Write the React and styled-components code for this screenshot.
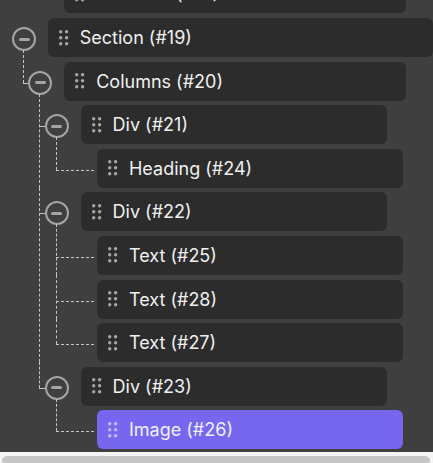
import React from 'react'
import styled, { createGlobalStyle, css } from 'styled-components'

const STEP = 16.4
const ROW_GAP = 4.6
const ROW_H = 39
const LINE_Y = ROW_GAP + ROW_H / 2 + 1.5

const lineX = (depth) => depth * STEP + 23

const GlobalStyle = createGlobalStyle`
  html, body {
    margin: 0;
    padding: 0;
    background: #f4f4f4;
    overflow: hidden;
  }
  body {
    font-family: Inter, "Noto Sans", "Liberation Sans", sans-serif;
  }
`

const Panel = styled.div`
  width: 433px;
  height: 452px;
  background: #3f3f3f;
  overflow: hidden;
`

const Tree = styled.div`
  margin-top: -30.2px;
  display: flex;
  flex-direction: column;
`

const Branch = styled.div`
  position: relative;
  display: flex;
  flex-direction: column;

  ${({ $depth, $first, $last, $leaf, $lines }) => $lines && css`
    &::before {
      content: '';
      position: absolute;
      left: ${lineX($depth - 1)}px;
      top: ${$first ? -7 : 0}px;
      ${$last ? `height: ${($first ? 7 : 0) + LINE_Y}px;` : 'bottom: 0;'}
      border-left: 1px dashed #c4c4c4;
    }
    &::after {
      content: '';
      position: absolute;
      top: ${LINE_Y}px;
      left: ${lineX($depth - 1)}px;
      width: ${($leaf ? $depth * STEP + 45 : $depth * STEP + 12) - lineX($depth - 1)}px;
      border-top: 1px dashed #c4c4c4;
    }
  `}
`

const Row = styled.div`
  display: flex;
  align-items: center;
  margin-top: ${ROW_GAP}px;
  height: ${ROW_H}px;
  padding-left: ${({ $depth }) => $depth * STEP}px;
`

const ToggleSlot = styled.div`
  flex: none;
  width: 48px;
  height: 100%;
  display: flex;
  align-items: center;
  justify-content: center;
  padding-top: 3px;
  box-sizing: border-box;
`

const Toggle = styled.button`
  width: 24px;
  height: 24px;
  padding: 0;
  border-radius: 50%;
  border: 2.5px solid #a5a5a5;
  background: transparent;
  display: flex;
  align-items: center;
  justify-content: center;
  box-sizing: border-box;
  cursor: pointer;
`

const Minus = styled.span`
  width: 11px;
  height: 3px;
  border-radius: 1.5px;
  background: #a5a5a5;
`

const Card = styled.div`
  flex: none;
  box-sizing: border-box;
  width: ${({ $width }) => $width}px;
  height: 100%;
  border-radius: 6px;
  background: ${({ $active }) => ($active ? '#7767ef' : '#2c2c2c')};
  display: flex;
  align-items: center;
  gap: 10.8px;
  padding-left: 11px;
`

const Label = styled.span`
  font-size: 18px;
  color: #f0f0f0;
  white-space: nowrap;
`

const ScrollTrack = styled.div`
  width: 433px;
  height: 11px;
  background: #f4f4f4;
  padding: 4px 3px 0 2px;
  box-sizing: border-box;
`

const Thumb = styled.div`
  height: 10px;
  border-radius: 5px;
  background: #c6c6c6;
`

const Grip = ({ active }) => (
  <svg width="10" height="16" viewBox="0 0 10 16" style={{ flex: 'none' }}>
    {[1.7, 7.7, 13.7].map(cy =>
      [1.7, 7.6].map(cx => (
        <circle key={`${cx}-${cy}`} cx={cx} cy={cy} r="1.7" fill={active ? '#c3bbf8' : '#a6a6a6'} />
      ))
    )}
  </svg>
)

const widths = { section: 385, columns: 342, div: 306, leaf: 306 }

const data = [
  { label: 'Columns (#18)', kind: 'columns', depth: 1, orphan: true },
  {
    label: 'Section (#19)', kind: 'section', depth: 0, children: [
      {
        label: 'Columns (#20)', kind: 'columns', children: [
          { label: 'Div (#21)', kind: 'div', children: [{ label: 'Heading (#24)', kind: 'leaf' }] },
          {
            label: 'Div (#22)', kind: 'div', children: [
              { label: 'Text (#25)', kind: 'leaf' },
              { label: 'Text (#28)', kind: 'leaf' },
              { label: 'Text (#27)', kind: 'leaf' },
            ]
          },
          { label: 'Div (#23)', kind: 'div', children: [{ label: 'Image (#26)', kind: 'leaf', active: true }] },
        ]
      }
    ]
  },
]

const TreeNode = ({ node, depth, first, last, lines }) => {
  const hasChildren = node.children && node.children.length > 0
  return (
    <Branch $depth={depth} $first={first} $last={last} $leaf={!hasChildren} $lines={lines}>
      <Row $depth={depth}>
        <ToggleSlot>
          {hasChildren && (
            <Toggle>
              <Minus />
            </Toggle>
          )}
        </ToggleSlot>
        <Card $width={widths[node.kind]} $active={node.active}>
          <Grip active={node.active} />
          <Label>{node.label}</Label>
        </Card>
      </Row>
      {hasChildren && node.children.map((child, i) => (
        <TreeNode
          key={child.label}
          node={child}
          depth={depth + 1}
          first={i === 0}
          last={i === node.children.length - 1}
          lines
        />
      ))}
    </Branch>
  )
}

const App = () => {
  return (
    <>
      <GlobalStyle />
      <Panel>
        <Tree>
          {data.map(node => (
            <TreeNode key={node.label} node={node} depth={node.depth} lines={false} />
          ))}
        </Tree>
      </Panel>
      <ScrollTrack>
        <Thumb />
      </ScrollTrack>
    </>
  )
}

export default App
